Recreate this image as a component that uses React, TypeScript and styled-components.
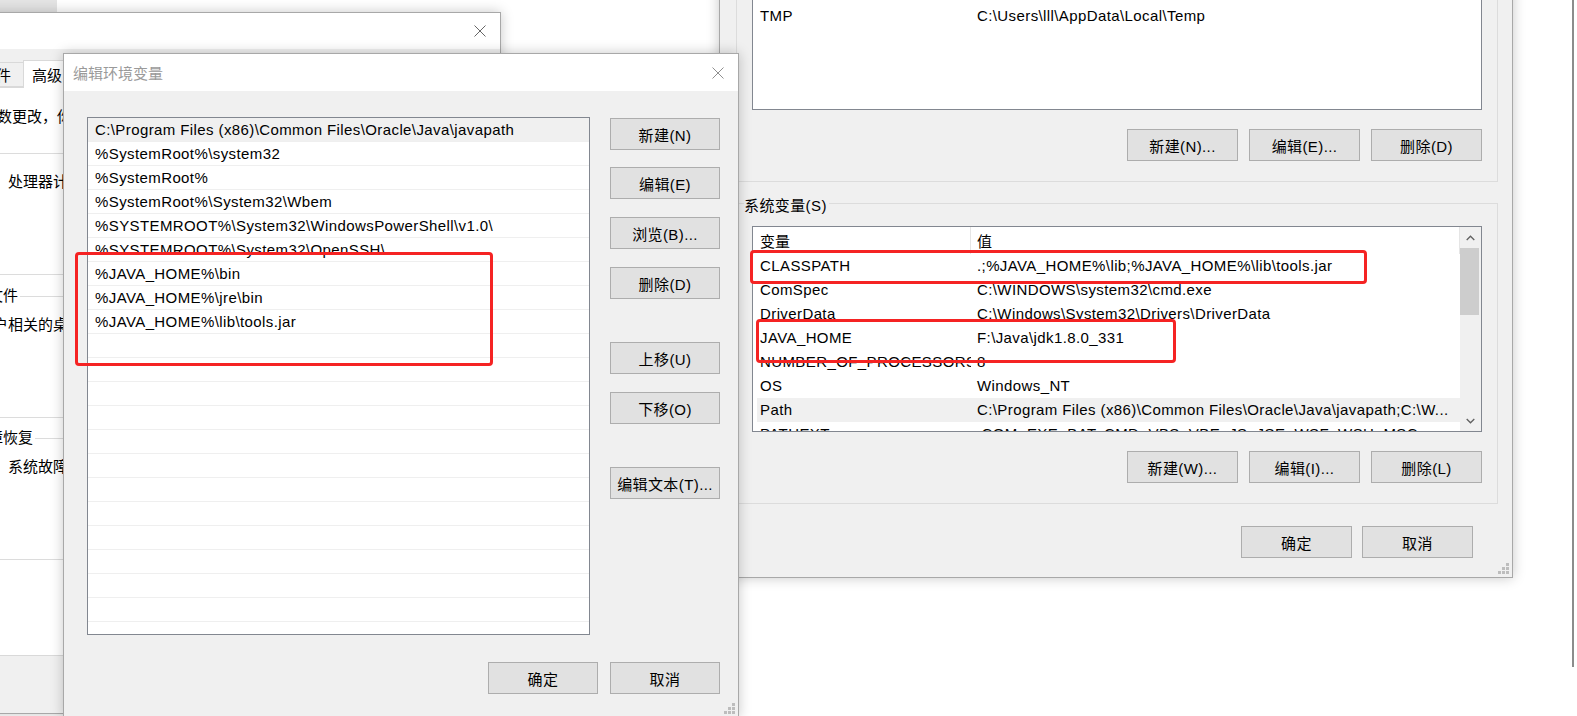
import React from "react";
import styled, { createGlobalStyle } from "styled-components";

const GlobalStyle = createGlobalStyle`
  html, body {
    margin: 0;
    padding: 0;
    background: #ffffff;
  }
  body {
    font-family: "Liberation Sans", "Noto Sans CJK SC", sans-serif;
    font-size: 15px;
    letter-spacing: 0.4px;
    color: #000000;
  }
  #root {
    width: 1577px;
    height: 716px;
  }
`;

const Desktop = styled.div`
  position: relative;
  width: 1577px;
  height: 716px;
  overflow: hidden;
  background: #ffffff;
`;

const BackPatch = styled.div`
  position: absolute;
  left: 0;
  top: 0;
  width: 57px;
  height: 12px;
  background: #e4e4e4;
`;

const EdgeLine = styled.div`
  position: absolute;
  left: 1572px;
  top: 0;
  width: 2px;
  height: 667px;
  background: #8c8c8c;
`;

const Win = styled.div<{ $x: number; $y: number; $w: number; $h: number; $z: number }>`
  position: absolute;
  left: ${(p) => p.$x}px;
  top: ${(p) => p.$y}px;
  width: ${(p) => p.$w}px;
  height: ${(p) => p.$h}px;
  z-index: ${(p) => p.$z};
  box-sizing: border-box;
  border: 1px solid #a8a8a8;
  background: #f0f0f0;
  box-shadow: 0 0 12px rgba(0, 0, 0, 0.22);
  display: flex;
  flex-direction: column;
  overflow: hidden;
`;

const TitleBar = styled.div<{ $h: number }>`
  flex: none;
  height: ${(p) => p.$h}px;
  background: #ffffff;
  display: flex;
  align-items: center;
  justify-content: space-between;
  padding: 0 14px 0 9px;
`;

const TitleText = styled.span`
  font-family: "Noto Sans CJK SC", sans-serif;
  font-size: 15px;
  letter-spacing: 0;
  color: #9a9a9a;
`;

const Grip = styled.svg`
  position: absolute;
  right: 3px;
  bottom: 3px;
`;

/* ---------- system properties (back window) ---------- */

const PropsBody = styled.div`
  flex: 1;
  display: flex;
  flex-direction: column;
  padding: 11px 8px 0 6px;
  letter-spacing: 0;
`;

const TabStrip = styled.div`
  display: flex;
  align-items: flex-start;
  height: 27px;
  margin-left: -4px;
`;

const Tab = styled.div<{ $active?: boolean }>`
  position: relative;
  z-index: ${(p) => (p.$active ? 2 : 1)};
  box-sizing: border-box;
  height: ${(p) => (p.$active ? 28 : 25)}px;
  margin-top: ${(p) => (p.$active ? 0 : 2)}px;
  padding: 0 ${(p) => (p.$active ? 8 : 12)}px;
  display: flex;
  align-items: center;
  background: ${(p) => (p.$active ? "#ffffff" : "#f0f0f0")};
  border: 1px solid #d9d9d9;
  border-bottom: ${(p) => (p.$active ? "none" : "1px solid #d9d9d9")};
  margin-right: -1px;
  white-space: nowrap;
`;

const TabPanel = styled.div`
  box-sizing: border-box;
  height: 569px;
  background: #ffffff;
  border: 1px solid #d9d9d9;
  padding: 19px 20px 0 32px;
`;

const Intro = styled.div`
  line-height: 20px;
  padding-left: 2px;
  white-space: nowrap;
`;

const PropsGroup = styled.div<{ $gap: number }>`
  position: relative;
  box-sizing: border-box;
  height: 122px;
  margin-top: ${(p) => p.$gap}px;
  border: 1px solid #dcdcdc;
  padding: 18px 10px 0 12px;
  line-height: 20px;
  white-space: nowrap;
`;

const GroupLabel = styled.span<{ $bg: string; $top: number }>`
  position: absolute;
  left: 7px;
  top: ${(p) => p.$top}px;
  line-height: 20px;
  padding-right: 2px;
  background: ${(p) => p.$bg};
  white-space: nowrap;
`;

/* ---------- buttons ---------- */

const Button = styled.div<{ $w: number }>`
  box-sizing: border-box;
  flex: none;
  width: ${(p) => p.$w}px;
  height: 32px;
  background: #e1e1e1;
  border: 1px solid #adadad;
  display: flex;
  align-items: center;
  justify-content: center;
  white-space: nowrap;
`;

/* ---------- edit dialog ---------- */

const EditBody = styled.div`
  flex: 1;
  display: flex;
  flex-direction: column;
  padding: 26px 18px 0 23px;
`;

const EditMain = styled.div`
  display: flex;
  gap: 20px;
`;

const PathList = styled.div`
  box-sizing: border-box;
  width: 503px;
  height: 518px;
  background: #ffffff;
  border: 1px solid #828790;
  overflow: hidden;
`;

const PathRow = styled.div<{ $hover?: boolean }>`
  box-sizing: border-box;
  height: 24px;
  line-height: 23px;
  padding-left: 7px;
  border-bottom: 1px solid #efefef;
  background: ${(p) => (p.$hover ? "#f0f0f0" : "#ffffff")};
  white-space: nowrap;
  overflow: hidden;
`;

const SideButtons = styled.div`
  display: flex;
  flex-direction: column;
  padding-top: 1px;
`;

const SideGap = styled.div<{ $h: number }>`
  height: ${(p) => p.$h}px;
`;

const Footer = styled.div<{ $top: number; $right: number; $gap: number }>`
  display: flex;
  justify-content: flex-end;
  gap: ${(p) => p.$gap}px;
  margin-top: ${(p) => p.$top}px;
  padding-right: ${(p) => p.$right}px;
`;

/* ---------- environment variables window ---------- */

const EnvBody = styled.div`
  flex: 1;
  display: flex;
  flex-direction: column;
  padding: 30px 14px 0 16px;
`;

const EnvGroup = styled.div<{ $gap: number }>`
  position: relative;
  margin-top: ${(p) => p.$gap}px;
  border: 1px solid #dcdcdc;
  padding: 22px 15px 20px 15px;
`;

const ButtonRow = styled.div`
  display: flex;
  justify-content: flex-end;
  gap: 11px;
  margin-top: 19px;
`;

const VarList = styled.div<{ $h: number }>`
  box-sizing: border-box;
  height: ${(p) => p.$h}px;
  background: #ffffff;
  border: 1px solid #828790;
  display: flex;
  overflow: hidden;
`;

const VarColumn = styled.div`
  flex: 1;
  min-width: 0;
  overflow: hidden;
`;

const VarHeader = styled.div`
  display: flex;
  height: 27px;
  align-items: stretch;
`;

const HeaderCell = styled.div<{ $w?: number }>`
  box-sizing: border-box;
  flex: ${(p) => (p.$w ? "none" : "1")};
  width: ${(p) => (p.$w ? `${p.$w}px` : "auto")};
  padding-left: ${(p) => (p.$w ? 7 : 6)}px;
  display: flex;
  align-items: center;
  border-right: 1px solid #e5e5e5;
  white-space: nowrap;
  font-family: "Noto Sans CJK SC", sans-serif;
  letter-spacing: 0;
`;

const VarRow = styled.div<{ $selected?: boolean }>`
  display: flex;
  height: 24px;
  line-height: 24px;
  margin-left: 4px;
  background: ${(p) => (p.$selected ? "#f0f0f0" : "transparent")};
  white-space: nowrap;
`;

const NameCell = styled.div`
  flex: none;
  width: 214px;
  padding-left: 3px;
  box-sizing: border-box;
  overflow: hidden;
`;

const ValueCell = styled.div`
  flex: 1;
  min-width: 0;
  padding-left: 6px;
  overflow: hidden;
`;

const ScrollTrack = styled.div`
  flex: none;
  width: 21px;
  background: #f0f0f0;
  display: flex;
  flex-direction: column;
`;

const ScrollArrow = styled.div`
  height: 21px;
  display: flex;
  align-items: center;
  justify-content: center;
`;

const ScrollThumb = styled.div`
  height: 67px;
  margin-right: 2px;
  background: #cdcdcd;
`;

const ScrollSpace = styled.div`
  flex: 1;
`;

const Annotation = styled.div<{ $x: number; $y: number; $w: number; $h: number }>`
  position: absolute;
  z-index: 20;
  left: ${(p) => p.$x}px;
  top: ${(p) => p.$y}px;
  width: ${(p) => p.$w}px;
  height: ${(p) => p.$h}px;
  box-sizing: border-box;
  border: 3px solid #f52323;
  border-radius: 4px;
`;

const CloseIcon = ({ color }: { color: string }) => (
  <svg width="12" height="12" viewBox="0 0 12 12">
    <path d="M0.5 0.5L11.5 11.5M11.5 0.5L0.5 11.5" stroke={color} strokeWidth="1" />
  </svg>
);

const Chevron = ({ up }: { up?: boolean }) => (
  <svg width="9" height="6" viewBox="0 0 9 6">
    <polyline
      points={up ? "0.7,5 4.5,1.2 8.3,5" : "0.7,1 4.5,4.8 8.3,1"}
      fill="none"
      stroke="#606060"
      strokeWidth="1.3"
    />
  </svg>
);

const ResizeGrip = () => (
  <Grip width="11" height="11" viewBox="0 0 11 11">
    {[
      [8, 0],
      [8, 4],
      [4, 4],
      [8, 8],
      [4, 8],
      [0, 8],
    ].map(([x, y]) => (
      <rect key={`${x}-${y}`} x={x} y={y} width="3" height="3" fill="#bdbdbd" />
    ))}
  </Grip>
);

const pathEntries = [
  "C:\\Program Files (x86)\\Common Files\\Oracle\\Java\\javapath",
  "%SystemRoot%\\system32",
  "%SystemRoot%",
  "%SystemRoot%\\System32\\Wbem",
  "%SYSTEMROOT%\\System32\\WindowsPowerShell\\v1.0\\",
  "%SYSTEMROOT%\\System32\\OpenSSH\\",
  "%JAVA_HOME%\\bin",
  "%JAVA_HOME%\\jre\\bin",
  "%JAVA_HOME%\\lib\\tools.jar",
];

const userVars = [
  ["TEMP", "C:\\Users\\lll\\AppData\\Local\\Temp"],
  ["TMP", "C:\\Users\\lll\\AppData\\Local\\Temp"],
];

const systemVars = [
  ["CLASSPATH", ".;%JAVA_HOME%\\lib;%JAVA_HOME%\\lib\\tools.jar"],
  ["ComSpec", "C:\\WINDOWS\\system32\\cmd.exe"],
  ["DriverData", "C:\\Windows\\System32\\Drivers\\DriverData"],
  ["JAVA_HOME", "F:\\Java\\jdk1.8.0_331"],
  ["NUMBER_OF_PROCESSORS", "8"],
  ["OS", "Windows_NT"],
  ["Path", "C:\\Program Files (x86)\\Common Files\\Oracle\\Java\\javapath;C:\\W..."],
  ["PATHEXT", ".COM;.EXE;.BAT;.CMD;.VBS;.VBE;.JS;.JSE;.WSF;.WSH;.MSC"],
];

const VarHead = () => (
  <VarHeader>
    <HeaderCell $w={218}>变量</HeaderCell>
    <HeaderCell>值</HeaderCell>
  </VarHeader>
);

const App = () => {
  const emptyRows = Array.from({ length: 14 }, (_, i) => i);
  return (
    <Desktop>
      <GlobalStyle />
      <BackPatch />
      <EdgeLine />

      {/* 系统属性 */}
      <Win $x={-120} $y={12} $w={621} $h={702} $z={1}>
        <TitleBar $h={36}>
          <TitleText>系统属性</TitleText>
          <CloseIcon color="#666666" />
        </TitleBar>
        <PropsBody>
          <TabStrip>
            <Tab>计算机名</Tab>
            <Tab>硬件</Tab>
            <Tab $active>高级</Tab>
            <Tab>系统保护</Tab>
            <Tab>远程</Tab>
          </TabStrip>
          <TabPanel>
            <Intro>要进行大多数更改，你必须作为管理员登录。</Intro>
            <PropsGroup $gap={26}>
              <GroupLabel $bg="#ffffff" $top={-11}>性能</GroupLabel>
              视觉效果，处理器计划，内存使用，以及虚拟内存
            </PropsGroup>
            <PropsGroup $gap={21}>
              <GroupLabel $bg="#ffffff" $top={-11}>用户配置文件</GroupLabel>
              与登录帐户相关的桌面设置
            </PropsGroup>
            <PropsGroup $gap={20}>
              <GroupLabel $bg="#ffffff" $top={-11}>启动和故障恢复</GroupLabel>
              系统启动、系统故障和调试信息
            </PropsGroup>
          </TabPanel>
        </PropsBody>
      </Win>

      {/* 环境变量 */}
      <Win $x={719} $y={-140} $w={794} $h={718} $z={2}>
        <TitleBar $h={38}>
          <TitleText>环境变量</TitleText>
          <CloseIcon color="#666666" />
        </TitleBar>
        <EnvBody>
          <EnvGroup $gap={0}>
            <GroupLabel $bg="#f0f0f0" $top={-8}>lll 的用户变量(U)</GroupLabel>
            <VarList $h={158}>
              <VarColumn>
                <VarHead />
                {userVars.map(([name, value]) => (
                  <VarRow key={name}>
                    <NameCell>{name}</NameCell>
                    <ValueCell>{value}</ValueCell>
                  </VarRow>
                ))}
              </VarColumn>
            </VarList>
            <ButtonRow>
              <Button $w={111}>新建(N)...</Button>
              <Button $w={111}>编辑(E)...</Button>
              <Button $w={111}>删除(D)</Button>
            </ButtonRow>
          </EnvGroup>
          <EnvGroup $gap={21}>
            <GroupLabel $bg="#f0f0f0" $top={-8}>系统变量(S)</GroupLabel>
            <VarList $h={206}>
              <VarColumn>
                <VarHead />
                {systemVars.map(([name, value]) => (
                  <VarRow key={name} $selected={name === "Path"}>
                    <NameCell>{name}</NameCell>
                    <ValueCell>{value}</ValueCell>
                  </VarRow>
                ))}
              </VarColumn>
              <ScrollTrack>
                <ScrollArrow>
                  <Chevron up />
                </ScrollArrow>
                <ScrollThumb />
                <ScrollSpace />
                <ScrollArrow>
                  <Chevron />
                </ScrollArrow>
              </ScrollTrack>
            </VarList>
            <ButtonRow>
              <Button $w={111}>新建(W)...</Button>
              <Button $w={111}>编辑(I)...</Button>
              <Button $w={111}>删除(L)</Button>
            </ButtonRow>
          </EnvGroup>
          <Footer $top={22} $right={25} $gap={10}>
            <Button $w={111}>确定</Button>
            <Button $w={111}>取消</Button>
          </Footer>
        </EnvBody>
        <ResizeGrip />
      </Win>

      {/* 编辑环境变量 */}
      <Win $x={63} $y={53} $w={676} $h={665} $z={3}>
        <TitleBar $h={37}>
          <TitleText>编辑环境变量</TitleText>
          <CloseIcon color="#8f8f8f" />
        </TitleBar>
        <EditBody>
          <EditMain>
            <PathList>
              {pathEntries.map((entry, i) => (
                <PathRow key={entry} $hover={i === 0}>
                  {entry}
                </PathRow>
              ))}
              {emptyRows.map((i) => (
                <PathRow key={`empty-${i}`} />
              ))}
            </PathList>
            <SideButtons>
              <Button $w={110}>新建(N)</Button>
              <SideGap $h={17} />
              <Button $w={110}>编辑(E)</Button>
              <SideGap $h={18} />
              <Button $w={110}>浏览(B)...</Button>
              <SideGap $h={18} />
              <Button $w={110}>删除(D)</Button>
              <SideGap $h={43} />
              <Button $w={110}>上移(U)</Button>
              <SideGap $h={18} />
              <Button $w={110}>下移(O)</Button>
              <SideGap $h={43} />
              <Button $w={110}>编辑文本(T)...</Button>
            </SideButtons>
          </EditMain>
          <Footer $top={27} $right={0} $gap={12}>
            <Button $w={110}>确定</Button>
            <Button $w={110}>取消</Button>
          </Footer>
        </EditBody>
        <ResizeGrip />
      </Win>

      <Annotation $x={75} $y={252} $w={418} $h={114} />
      <Annotation $x={750} $y={250} $w={617} $h={34} />
      <Annotation $x={756} $y={319} $w={420} $h={44} />
    </Desktop>
  );
};

export default App;
